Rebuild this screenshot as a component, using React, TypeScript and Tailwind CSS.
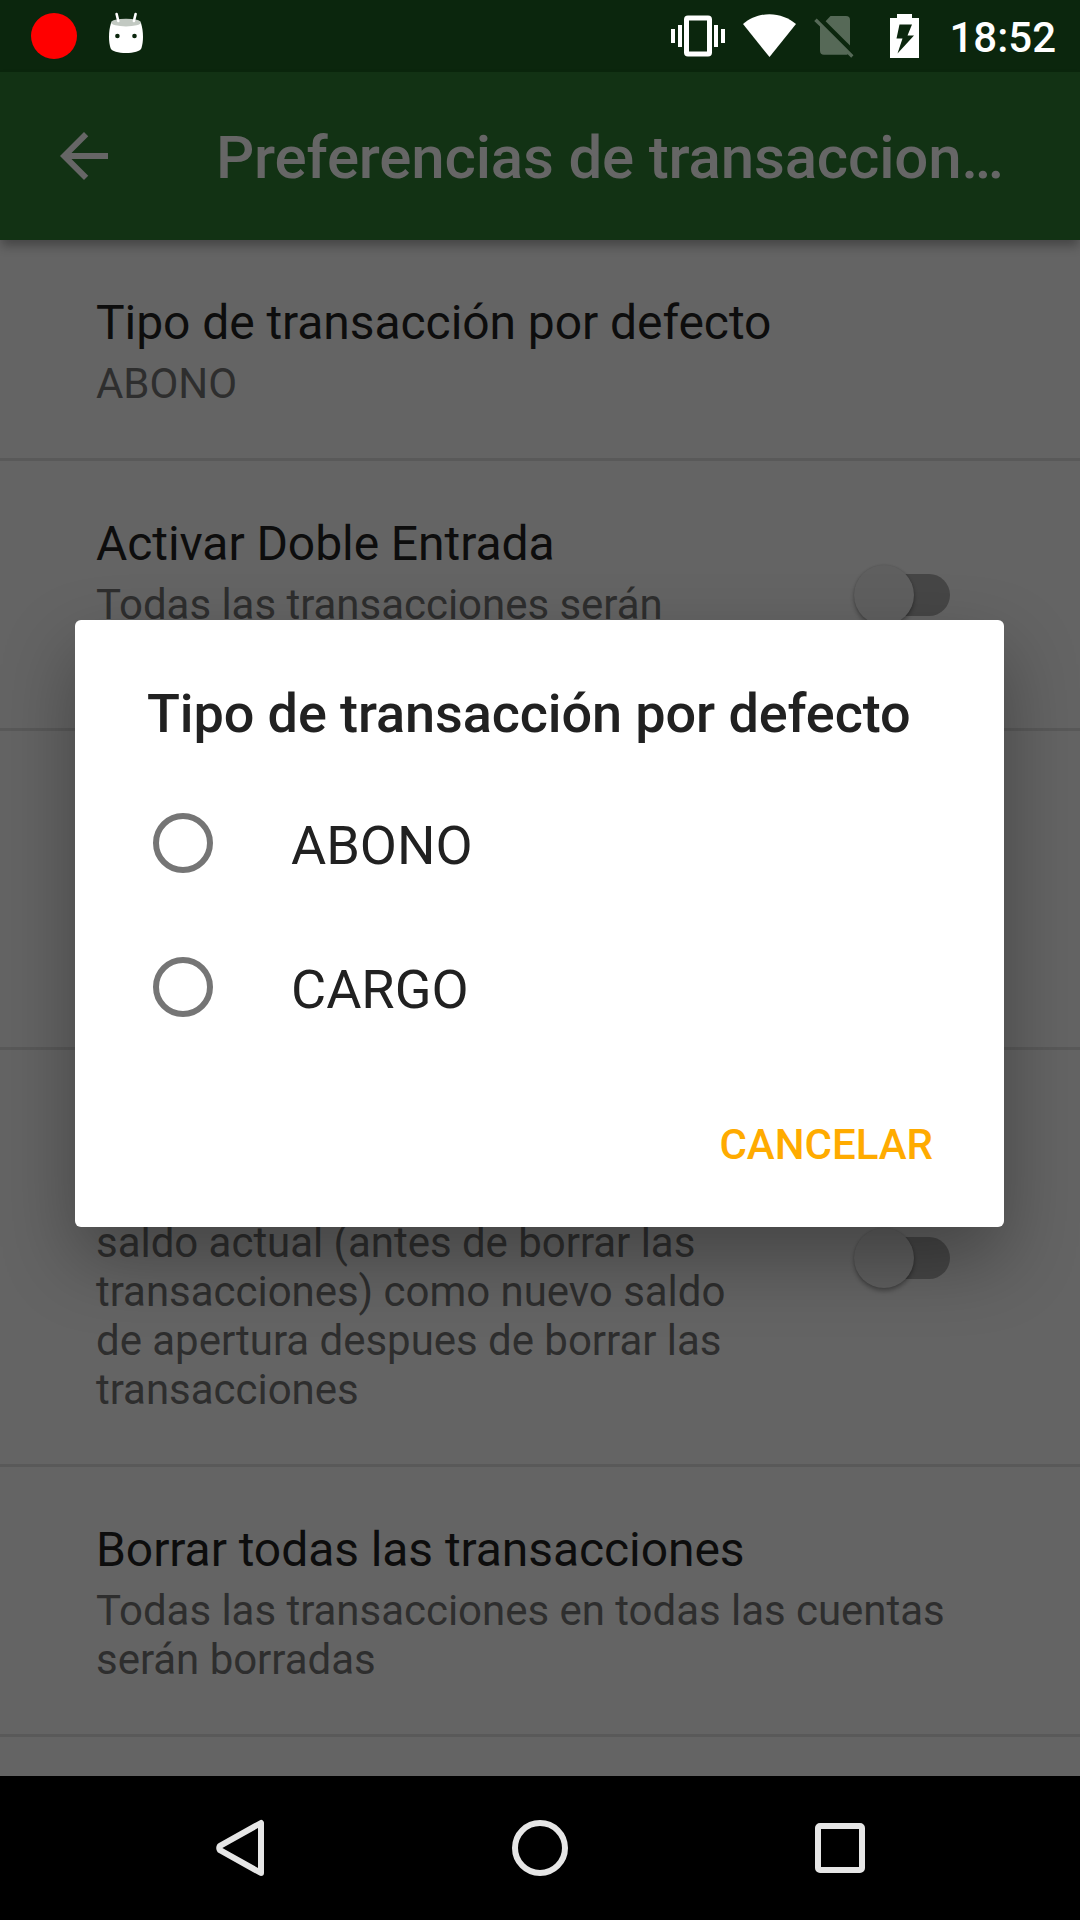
import type { ReactNode } from "react";

function StatusBar() {
  return (
    <div className="flex h-[72px] items-center bg-[#0b260d] text-white">
      <div className="ml-[31px] h-[46px] w-[46px] rounded-full bg-[#ff0000]" />
      <svg className="ml-[31px] h-[72px] w-9" viewBox="108 0 36 72" fill="none">
        <path
          d="M111 23h30c1.4 4.500 2 9 2 14 0 4-.6 8-1.500 11-1 3.500-8 5-15.500 5s-14.500-1.500-15.500-5c-.900-3-1.500-7-1.500-11 0-5 .600-9.500 2-14z"
          fill="#fff"
        />
        <ellipse cx="126" cy="22.600" rx="15" ry="3.900" fill="#c2c9c2" />
        <path d="M116.600 14l1.700 7M135.600 14l-1.700 7" stroke="#fff" strokeWidth="2.600" strokeLinecap="round" />
        <circle cx="117.400" cy="36" r="2.300" fill="#0b260d" />
        <circle cx="134.500" cy="36" r="2.300" fill="#0b260d" />
      </svg>
      <svg className="ml-auto h-[72px] w-[54px]" viewBox="671 0 54 72" fill="#fff">
        <path d="M671 29h4v14h-4zM678 25h4v22h-4zM714 25h4v22h-4zM721 29h4v14h-4z" />
        <path
          fillRule="evenodd"
          d="M688 15.500h20a4 4 0 0 1 4 4v33a4 4 0 0 1-4 4h-20a4 4 0 0 1-4-4v-33a4 4 0 0 1 4-4zM689 20.500v31h18v-31z"
        />
      </svg>
      <svg className="ml-[18px] h-[72px] w-[53px]" viewBox="743 0 53 72" fill="#fff">
        <path d="M743 24c7-6 16.500-9.800 26.500-9.800S789 18 796 24l-26.500 33z" />
      </svg>
      <svg className="ml-[18px] h-[72px] w-10" viewBox="814 0 40 72" fill="#566957">
        <path d="M830.500 16h15.500a4 4 0 0 1 4 4v25.500L825.600 21.200z" />
        <path d="M816.700 18.500L853.500 55.300l-2.300 2.500-3.500-3.500q-.8.500-1.700.5h-22a4 4 0 0 1-4-4V26.600L814.200 20.900z" />
      </svg>
      <svg className="ml-9 h-[72px] w-[29px]" viewBox="890 0 29 72" fill="#fff">
        <path
          fillRule="evenodd"
          d="M897 14h15v4h7v40h-29V18h7zM899.500 24.500l-3 14h6l-5 15 16.500-18h-6.500l4.500-11z"
        />
      </svg>
      <span className="mr-6 ml-[30px] pt-[3px] text-[42px] leading-[69px] font-medium">18:52</span>
    </div>
  );
}

function AppBar() {
  return (
    <div className="relative z-10 flex h-[168px] items-center bg-[#123214] pl-12 text-[#666666] shadow-[0_7px_10px_-1px_rgba(0,0,0,0.3)]">
      <svg className="h-[72px] w-[72px] shrink-0" viewBox="0 0 24 24" fill="currentColor">
        <path d="M20 11H7.830l5.590-5.590L12 4l-8 8 8 8 1.410-1.410L7.830 13H20v-2z" />
      </svg>
      <h1 className="ml-24 pt-1 text-[60px] leading-[72px] font-medium tracking-[-0.17px] whitespace-nowrap">
        Preferencias de transaccion…
      </h1>
    </div>
  );
}

function Toggle() {
  return (
    <div className="mr-[130px] flex h-[60px] w-24 shrink-0 items-center pt-px">
      <div className="relative z-10 h-[60px] w-[60px] shrink-0 rounded-full bg-[#5f5f5f] shadow-[0_3px_4px_rgba(0,0,0,0.3),0_0_2px_rgba(0,0,0,0.15)]" />
      <div className="-ml-10 h-[42px] w-[76px] shrink-0 rounded-full bg-[#464646]" />
    </div>
  );
}

function Row({ height, children, toggle }: { height: string; children?: ReactNode; toggle?: boolean }) {
  return (
    <div className={`flex shrink-0 items-center border-b-[3px] border-[#595959] ${height}`}>
      <div className="flex h-full flex-1 flex-col pt-[55px] pb-[50px] pl-24">{children}</div>
      {toggle && <Toggle />}
    </div>
  );
}

function Title({ children }: { children: ReactNode }) {
  return (
    <div className="text-[48px] leading-[56px] tracking-[-0.07px] whitespace-nowrap text-[#0d0d0d]">{children}</div>
  );
}

function Summary({ children, className = "mt-2" }: { children: ReactNode; className?: string }) {
  return (
    <div className={`text-[42px] leading-[49px] tracking-[-0.03px] whitespace-nowrap text-[#2e2e2e] ${className}`}>
      {children}
    </div>
  );
}

function Option({ label }: { label: string }) {
  return (
    <label className="flex h-36 items-center pl-[78px]">
      <span className="h-[60px] w-[60px] rounded-full border-[6px] border-[#757575]" />
      <span className="ml-[78px] pt-[5px] text-[54px] leading-[64px]">{label}</span>
    </label>
  );
}

function Dialog() {
  return (
    <div
      role="dialog"
      className="absolute top-[620px] left-[75px] z-20 flex h-[607px] w-[929px] flex-col rounded-[6px] bg-white text-[#212121] shadow-[0_32px_75px_rgba(0,0,0,0.32)]"
    >
      <h2 className="mt-[62px] ml-[72px] text-[54px] leading-[64px] font-medium tracking-[-0.1px] whitespace-nowrap">
        Tipo de transacción por defecto
      </h2>
      <div className="mt-[25px]">
        <Option label="ABONO" />
        <Option label="CARGO" />
      </div>
      <button className="mt-auto mr-[71px] mb-[58px] self-end text-[42px] leading-[49px] font-medium text-[#ffab00]">
        CANCELAR
      </button>
    </div>
  );
}

function NavBar() {
  return (
    <div className="flex h-36 items-center justify-between bg-black px-[210px]">
      <svg className="h-[60px] w-[60px]" viewBox="0 0 60 60" fill="none" stroke="#e6e6e6" strokeWidth="6" strokeLinejoin="round">
        <path d="M51 5v50L10 32.200Q8.500 30 10 27.800z" />
      </svg>
      <svg className="h-[60px] w-[60px]" viewBox="0 0 60 60" fill="none" stroke="#e6e6e6" strokeWidth="6">
        <circle cx="30" cy="30" r="25" />
      </svg>
      <svg className="h-[60px] w-[60px]" viewBox="0 0 60 60" fill="none" stroke="#e6e6e6" strokeWidth="6">
        <rect x="8" y="8" width="44" height="44" rx="2" />
      </svg>
    </div>
  );
}

export default function App() {
  return (
    <div className="relative flex h-[1920px] w-[1080px] flex-col overflow-hidden bg-[#646464] font-[Roboto,sans-serif]">
      <StatusBar />
      <AppBar />
      <div className="flex flex-1 flex-col overflow-hidden">
        <Row height="h-[221px]">
          <Title>Tipo de transacción por defecto</Title>
          <Summary>ABONO</Summary>
        </Row>
        <Row height="h-[270px]" toggle>
          <Title>Activar Doble Entrada</Title>
          <Summary>Todas las transacciones serán</Summary>
        </Row>
        <Row height="h-[319px]" />
        <Row height="h-[417px]" toggle>
          <Summary className="mt-auto">
            saldo actual (antes de borrar las
            <br />
            transacciones) como nuevo saldo
            <br />
            de apertura despues de borrar las
            <br />
            transacciones
          </Summary>
        </Row>
        <Row height="h-[270px]">
          <Title>Borrar todas las transacciones</Title>
          <Summary>
            Todas las transacciones en todas las cuentas
            <br />
            serán borradas
          </Summary>
        </Row>
      </div>
      <NavBar />
      <Dialog />
    </div>
  );
}
